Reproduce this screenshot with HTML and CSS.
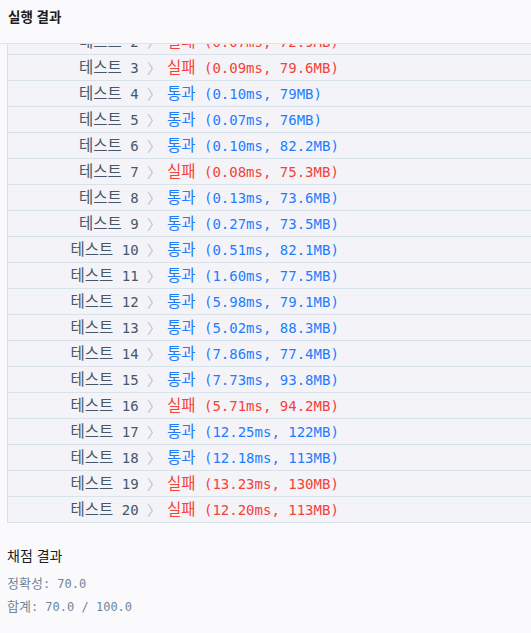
FILE: index.html
```html
<!DOCTYPE html>
<html lang="ko">
<head>
<meta charset="utf-8">
<link rel="stylesheet" href="styles.css">
</head>
<body>
<div class="page">
  <div class="header">실행 결과</div>
  <div class="scroll">
    <div class="table">
      <div class="row"><span class="name"><span class="ko">테스트</span> 2 <span class="arrow">〉</span></span><span class="result failed"><span class="ko">실패</span> (0.07ms, 72.9MB)</span></div>
      <div class="row"><span class="name"><span class="ko">테스트</span> 3 <span class="arrow">〉</span></span><span class="result failed"><span class="ko">실패</span> (0.09ms, 79.6MB)</span></div>
      <div class="row"><span class="name"><span class="ko">테스트</span> 4 <span class="arrow">〉</span></span><span class="result passed"><span class="ko">통과</span> (0.10ms, 79MB)</span></div>
      <div class="row"><span class="name"><span class="ko">테스트</span> 5 <span class="arrow">〉</span></span><span class="result passed"><span class="ko">통과</span> (0.07ms, 76MB)</span></div>
      <div class="row"><span class="name"><span class="ko">테스트</span> 6 <span class="arrow">〉</span></span><span class="result passed"><span class="ko">통과</span> (0.10ms, 82.2MB)</span></div>
      <div class="row"><span class="name"><span class="ko">테스트</span> 7 <span class="arrow">〉</span></span><span class="result failed"><span class="ko">실패</span> (0.08ms, 75.3MB)</span></div>
      <div class="row"><span class="name"><span class="ko">테스트</span> 8 <span class="arrow">〉</span></span><span class="result passed"><span class="ko">통과</span> (0.13ms, 73.6MB)</span></div>
      <div class="row"><span class="name"><span class="ko">테스트</span> 9 <span class="arrow">〉</span></span><span class="result passed"><span class="ko">통과</span> (0.27ms, 73.5MB)</span></div>
      <div class="row"><span class="name"><span class="ko">테스트</span> 10 <span class="arrow">〉</span></span><span class="result passed"><span class="ko">통과</span> (0.51ms, 82.1MB)</span></div>
      <div class="row"><span class="name"><span class="ko">테스트</span> 11 <span class="arrow">〉</span></span><span class="result passed"><span class="ko">통과</span> (1.60ms, 77.5MB)</span></div>
      <div class="row"><span class="name"><span class="ko">테스트</span> 12 <span class="arrow">〉</span></span><span class="result passed"><span class="ko">통과</span> (5.98ms, 79.1MB)</span></div>
      <div class="row"><span class="name"><span class="ko">테스트</span> 13 <span class="arrow">〉</span></span><span class="result passed"><span class="ko">통과</span> (5.02ms, 88.3MB)</span></div>
      <div class="row"><span class="name"><span class="ko">테스트</span> 14 <span class="arrow">〉</span></span><span class="result passed"><span class="ko">통과</span> (7.86ms, 77.4MB)</span></div>
      <div class="row"><span class="name"><span class="ko">테스트</span> 15 <span class="arrow">〉</span></span><span class="result passed"><span class="ko">통과</span> (7.73ms, 93.8MB)</span></div>
      <div class="row"><span class="name"><span class="ko">테스트</span> 16 <span class="arrow">〉</span></span><span class="result failed"><span class="ko">실패</span> (5.71ms, 94.2MB)</span></div>
      <div class="row"><span class="name"><span class="ko">테스트</span> 17 <span class="arrow">〉</span></span><span class="result passed"><span class="ko">통과</span> (12.25ms, 122MB)</span></div>
      <div class="row"><span class="name"><span class="ko">테스트</span> 18 <span class="arrow">〉</span></span><span class="result passed"><span class="ko">통과</span> (12.18ms, 113MB)</span></div>
      <div class="row"><span class="name"><span class="ko">테스트</span> 19 <span class="arrow">〉</span></span><span class="result failed"><span class="ko">실패</span> (13.23ms, 130MB)</span></div>
      <div class="row"><span class="name"><span class="ko">테스트</span> 20 <span class="arrow">〉</span></span><span class="result failed"><span class="ko">실패</span> (12.20ms, 113MB)</span></div>
    </div>
    <div class="summary">
      <div class="summary-title">채점 결과</div>
      <p class="summary-line first"><span class="ko-sm">정확성</span>: 70.0</p>
      <p class="summary-line"><span class="ko-sm">합계</span>: 70.0 / 100.0</p>
    </div>
  </div>
</div>
</body>
</html>
```
FILE: styles.css
```css
html, body {
  margin: 0;
  padding: 0;
  background: #fafafc;
  width: 531px;
  height: 633px;
  overflow: hidden;
}

.page {
  display: flex;
  flex-direction: column;
  height: 633px;
  font-family: "DejaVu Sans Mono", "Noto Sans CJK KR", monospace;
}

.header {
  height: 44px;
  box-sizing: border-box;
  padding: 8px 0 0 8px;
  line-height: 16px;
  font-family: "Noto Sans CJK KR", sans-serif;
  font-size: 13.5px;
  font-weight: 700;
  color: #1b1c1d;
  border-bottom: 1px solid #dfe4ea;
  background: #fafafc;
  flex: none;
}

.scroll {
  flex: 1;
  overflow: hidden;
}

.table {
  margin: -16px 0 0 7px;
  width: 560px;
  border: 1px solid #d7e2eb;
  background: #f4f4f8;
}

.row {
  display: flex;
  height: 25px;
  box-sizing: content-box;
  line-height: 23px;
  padding-bottom: 0;
  font-size: 14px;
  white-space: nowrap;
  overflow: hidden;
}

.row > span {
  display: block;
  height: 23px;
}

.row + .row {
  border-top: 1px solid #d7e2eb;
}

.ko {
  font-family: "Noto Sans CJK KR", sans-serif;
  font-size: 15.5px;
}

.ko-sm {
  font-family: "Noto Sans CJK KR", sans-serif;
  font-size: 13px;
}

.name {
  width: 153px;
  flex: none;
  text-align: right;
  color: #465769;
}

.arrow {
  color: #b4c0cc;
}

.result {
  padding-left: 6px;
}

.passed {
  color: #1f7cff;
}

.failed {
  color: #f5413a;
}

.summary {
  padding: 22px 0 0 7px;
}

.summary-title {
  font-family: "Noto Sans CJK KR", sans-serif;
  font-size: 14px;
  line-height: 20px;
  color: #1b1c1d;
}

.summary-line {
  margin: 2px 0 0;
  height: 21px;
  font-size: 12px;
  line-height: 21px;
  color: #70879a;
}

.summary-line.first {
  margin-top: 7px;
}
```
